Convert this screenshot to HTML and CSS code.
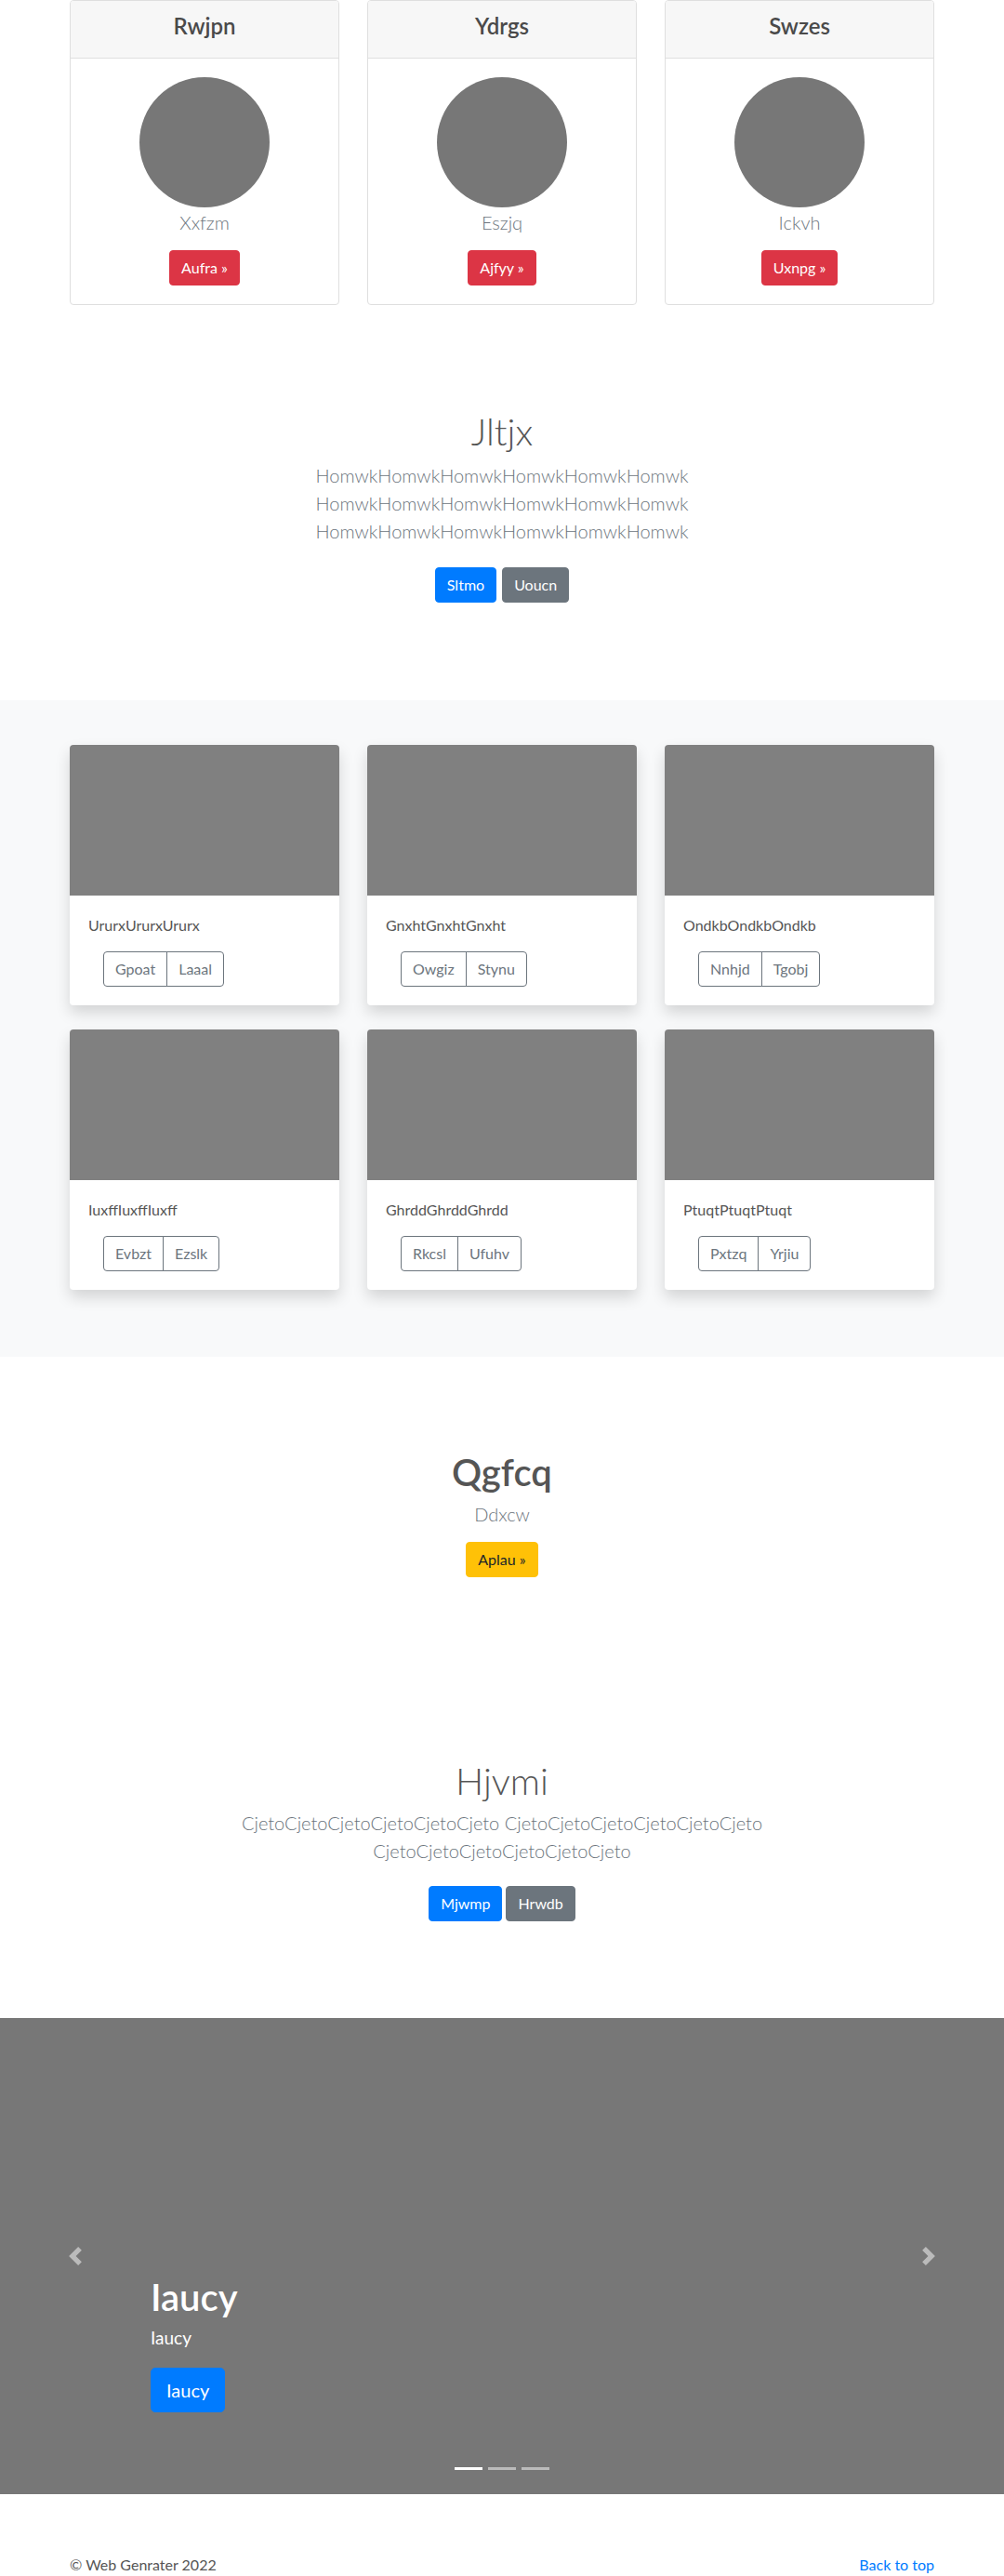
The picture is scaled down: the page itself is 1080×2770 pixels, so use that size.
FILE: index.html
```html
<!DOCTYPE html>
<html lang="en">
<head>
<meta charset="utf-8">
<title>Web Genrater</title>
<link rel="stylesheet" href="styles.css">
</head>
<body>
<section class="pricing">
  <div class="container deck">
    <div class="price-card">
      <div class="price-head"><h4>Rwjpn</h4></div>
      <div class="price-body">
        <div class="avatar"></div>
        <p class="lead">Xxfzm</p>
        <a class="btn btn-danger" href="#">Aufra &raquo;</a>
      </div>
    </div>
    <div class="price-card">
      <div class="price-head"><h4>Ydrgs</h4></div>
      <div class="price-body">
        <div class="avatar"></div>
        <p class="lead">Eszjq</p>
        <a class="btn btn-danger" href="#">Ajfyy &raquo;</a>
      </div>
    </div>
    <div class="price-card">
      <div class="price-head"><h4>Swzes</h4></div>
      <div class="price-body">
        <div class="avatar"></div>
        <p class="lead">Ickvh</p>
        <a class="btn btn-danger" href="#">Uxnpg &raquo;</a>
      </div>
    </div>
  </div>
</section>

<section class="intro intro-top">
  <div class="container">
    <h1 class="title-light">Jltjx</h1>
    <p class="lead narrow">HomwkHomwkHomwkHomwkHomwkHomwk HomwkHomwkHomwkHomwkHomwkHomwk HomwkHomwkHomwkHomwkHomwkHomwk</p>
    <div class="btn-row gap-6">
      <a class="btn btn-primary" href="#">Sltmo</a>
      <a class="btn btn-secondary" href="#">Uoucn</a>
    </div>
  </div>
</section>

<section class="album">
  <div class="container album-grid">
    <div class="album-card">
      <div class="thumb"></div>
      <div class="album-body">
        <p class="card-text">UrurxUrurxUrurx</p>
        <div class="btn-group"><a class="btn btn-outline" href="#">Gpoat</a><a class="btn btn-outline" href="#">Laaal</a></div>
      </div>
    </div>
    <div class="album-card">
      <div class="thumb"></div>
      <div class="album-body">
        <p class="card-text">GnxhtGnxhtGnxht</p>
        <div class="btn-group"><a class="btn btn-outline" href="#">Owgiz</a><a class="btn btn-outline" href="#">Stynu</a></div>
      </div>
    </div>
    <div class="album-card">
      <div class="thumb"></div>
      <div class="album-body">
        <p class="card-text">OndkbOndkbOndkb</p>
        <div class="btn-group"><a class="btn btn-outline" href="#">Nnhjd</a><a class="btn btn-outline" href="#">Tgobj</a></div>
      </div>
    </div>
    <div class="album-card">
      <div class="thumb"></div>
      <div class="album-body">
        <p class="card-text">IuxffIuxffIuxff</p>
        <div class="btn-group"><a class="btn btn-outline" href="#">Evbzt</a><a class="btn btn-outline" href="#">Ezslk</a></div>
      </div>
    </div>
    <div class="album-card">
      <div class="thumb"></div>
      <div class="album-body">
        <p class="card-text">GhrddGhrddGhrdd</p>
        <div class="btn-group"><a class="btn btn-outline" href="#">Rkcsl</a><a class="btn btn-outline" href="#">Ufuhv</a></div>
      </div>
    </div>
    <div class="album-card">
      <div class="thumb"></div>
      <div class="album-body">
        <p class="card-text">PtuqtPtuqtPtuqt</p>
        <div class="btn-group"><a class="btn btn-outline" href="#">Pxtzq</a><a class="btn btn-outline" href="#">Yrjiu</a></div>
      </div>
    </div>
  </div>
</section>

<section class="feature">
  <div class="container">
    <h1 class="title-bold">Qgfcq</h1>
    <p class="lead">Ddxcw</p>
    <div class="btn-row feature-btn">
      <a class="btn btn-warning" href="#">Aplau &raquo;</a>
    </div>
  </div>
</section>

<section class="intro intro-bottom">
  <div class="container">
    <h1 class="title-light">Hjvmi</h1>
    <p class="lead narrow">CjetoCjetoCjetoCjetoCjetoCjeto CjetoCjetoCjetoCjetoCjetoCjeto CjetoCjetoCjetoCjetoCjetoCjeto</p>
    <div class="btn-row gap-4 btn-row-low">
      <a class="btn btn-primary" href="#">Mjwmp</a>
      <a class="btn btn-secondary" href="#">Hrwdb</a>
    </div>
  </div>
</section>

<section class="carousel">
  <a class="control control-prev" href="#" aria-label="Previous">
    <svg viewBox="0 0 8 8" width="20" height="20"><path fill="#fff" d="M5.25 0l-4 4 4 4 1.5-1.5L4.25 4l2.5-2.5L5.25 0z"/></svg>
  </a>
  <div class="caption">
    <h1>Iaucy</h1>
    <p class="caption-text">Iaucy</p>
    <div class="caption-btn"><a class="btn btn-lg btn-primary" href="#">Iaucy</a></div>
  </div>
  <a class="control control-next" href="#" aria-label="Next">
    <svg viewBox="0 0 8 8" width="20" height="20"><path fill="#fff" d="M2.75 0l-1.5 1.5L3.75 4l-2.5 2.5L2.75 8l4-4-4-4z"/></svg>
  </a>
  <ol class="indicators">
    <li class="active"></li>
    <li></li>
    <li></li>
  </ol>
</section>

<footer class="container footer">
  <p>&copy; Web Genrater 2022</p>
  <p><a href="#">Back to top</a></p>
</footer>
</body>
</html>
```

FILE: styles.css
```css
* { box-sizing: border-box; }

body {
  margin: 0;
  font-family: Lato, "Open Sans", "Noto Sans", sans-serif;
  font-size: 16px;
  line-height: 1.5;
  color: #555;
  background: #fff;
}

h1, h4, p, ol { margin: 0; }

a { color: #007bff; text-decoration: none; }

.container {
  width: 960px;
  margin: 0 auto;
  padding: 0 15px;
}

/* buttons */
.btn {
  display: inline-block;
  padding: 6px 12px;
  font-size: 16px;
  line-height: 24px;
  font-weight: 400;
  border: 1px solid transparent;
  border-radius: 4px;
  text-align: center;
  white-space: nowrap;
}
.btn-danger { background: #dc3545; border-color: #dc3545; color: #fff; }
.btn-primary { background: #007bff; border-color: #007bff; color: #fff; }
.btn-secondary { background: #6c757d; border-color: #6c757d; color: #fff; }
.btn-warning { background: #ffc107; border-color: #ffc107; color: #212529; }
.btn-outline { background: transparent; border-color: #6c757d; color: #6c757d; }
.btn-lg { padding: 8px 16px; font-size: 20px; line-height: 30px; border-radius: 5px; }

.lead {
  font-size: 20px;
  font-weight: 300;
  line-height: 30px;
  color: #6c757d;
}

/* pricing */
.deck {
  display: grid;
  grid-template-columns: repeat(3, 1fr);
  column-gap: 30px;
}
.price-card {
  border: 1px solid #dfdfdf;
  border-radius: 4px;
  overflow: hidden;
  background: #fff;
}
.price-head {
  height: 62px;
  padding: 12px 20px;
  background: #f7f7f7;
  border-bottom: 1px solid #dfdfdf;
  text-align: center;
}
.price-head h4 {
  font-size: 24px;
  font-weight: 600;
  line-height: 29px;
  color: #4a4a4a;
}
.price-body {
  display: flex;
  flex-direction: column;
  align-items: center;
  padding: 20px;
}
.avatar {
  width: 140px;
  height: 140px;
  border-radius: 50%;
  background: #777;
  margin-bottom: 1px;
}
.price-body .btn { margin-top: 15px; }

/* intro sections */
.intro { text-align: center; }
.intro-top { padding: 112px 0 105px; }
.intro-bottom { padding: 96px 0 104px; }
.title-light {
  font-size: 40px;
  font-weight: 300;
  line-height: 48px;
  color: #555;
  margin-bottom: 8px;
}
.intro-bottom .title-light { margin-bottom: 6px; }
.narrow { max-width: 640px; margin: 0 auto; }
.btn-row {
  display: flex;
  justify-content: center;
  margin-top: 24px;
}
.btn-row-low { margin-top: 23px; }
.gap-6 { gap: 6px; }
.gap-4 { gap: 4px; }

/* album */
.album {
  background: #f8f9fa;
  padding: 48px 0 72px;
}
.album-grid {
  display: grid;
  grid-template-columns: repeat(3, 1fr);
  gap: 26px 30px;
}
.album-card {
  background: #fff;
  border-radius: 4px;
  overflow: hidden;
  box-shadow: 0 8px 16px rgba(0, 0, 0, 0.15);
}
.thumb { height: 162px; background: #808080; }
.album-body { padding: 20px; }
.card-text { margin-bottom: 16px; color: #555; }
.btn-group { display: inline-flex; margin-left: 16px; }
.btn-group .btn:first-child { border-radius: 4px 0 0 4px; }
.btn-group .btn + .btn { margin-left: -1px; border-radius: 0 4px 4px 0; }

/* feature */
.feature { padding: 100px 0 99px; text-align: center; }
.title-bold {
  font-size: 40px;
  font-weight: 600;
  line-height: 48px;
  color: #555;
  margin-bottom: 6px;
}
.feature-btn { margin-top: 15px; }

/* carousel */
.carousel {
  position: relative;
  height: 512px;
  background: #777;
}
.control {
  position: absolute;
  top: 0;
  bottom: 0;
  width: 15%;
  display: flex;
  align-items: center;
  justify-content: center;
  opacity: 0.5;
}
.control-prev { left: 0; }
.control-next { right: 0; }
.control svg { display: block; }
.caption {
  position: absolute;
  left: 15%;
  right: 15%;
  bottom: 68px;
  padding: 20px 0;
  color: #fff;
  text-align: left;
}
.caption h1 {
  font-size: 40px;
  font-weight: 600;
  line-height: 48px;
  margin-bottom: 5px;
}
.caption-text {
  font-size: 19px;
  line-height: 29px;
  margin-bottom: 18px;
}
.caption-btn { display: flex; }
.indicators {
  position: absolute;
  left: 15%;
  right: 15%;
  bottom: 26px;
  padding: 0;
  list-style: none;
  display: flex;
  justify-content: center;
  gap: 6px;
}
.indicators li {
  width: 30px;
  height: 3px;
  background: #fff;
  opacity: 0.5;
}
.indicators li.active { opacity: 1; }

/* footer */
.footer {
  display: flex;
  justify-content: space-between;
  padding-top: 64px;
  color: #555;
}
```
